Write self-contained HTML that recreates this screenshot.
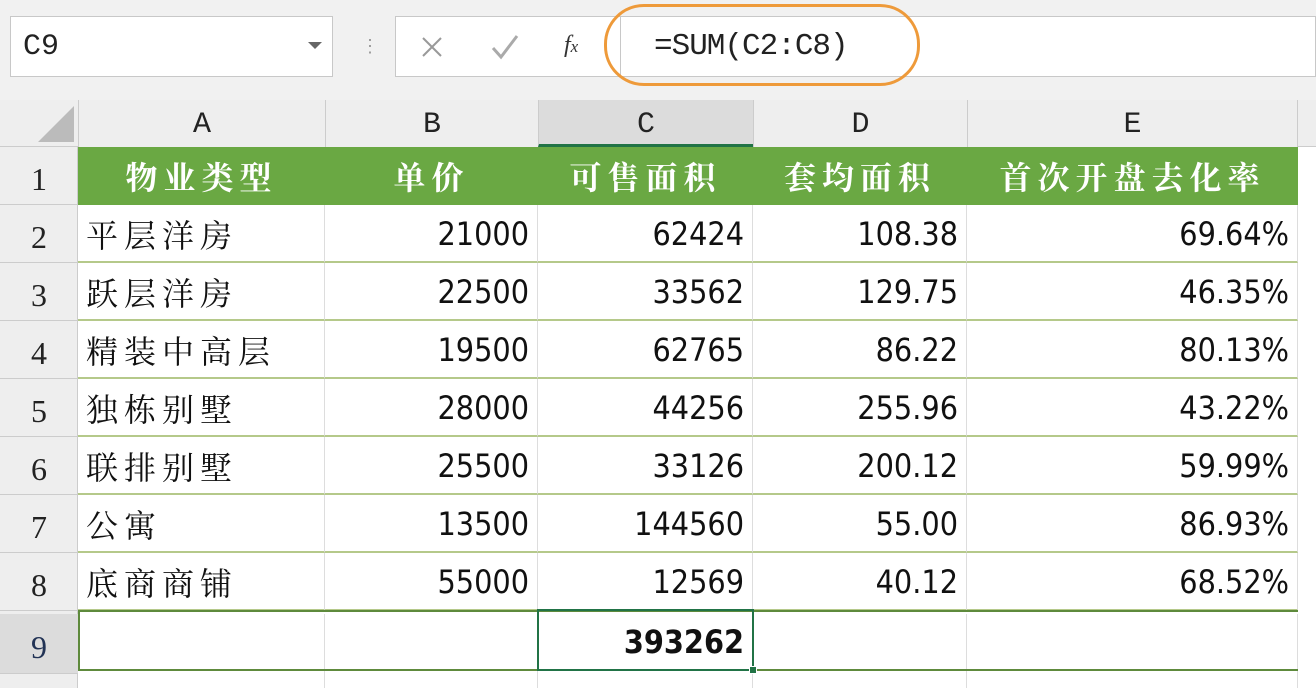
<!DOCTYPE html>
<html><head><meta charset="utf-8"><style>
body{margin:0;width:1316px;height:688px;overflow:hidden;background:#fff;font-family:"Liberation Sans","Noto Sans CJK SC",sans-serif;position:relative}
.a{position:absolute;box-sizing:border-box}
.hdr{background:#eeeeee;color:#222;font-family:"Liberation Mono","Noto Sans CJK SC",monospace;font-size:30px;text-align:center}
.cell{position:absolute;box-sizing:border-box;height:58px;line-height:58px;font-size:32px;color:#111;padding:0 8px;white-space:nowrap;overflow:hidden}
.cj{font-family:"Noto Serif CJK SC","Noto Sans CJK SC",serif;letter-spacing:6px}
.r{text-align:right;font-family:"DejaVu Sans Condensed","Liberation Sans",sans-serif;font-stretch:condensed}
.g{background:#6aa843;color:#fff;font-weight:bold;text-align:center;font-family:"Noto Serif CJK SC","Noto Sans CJK SC",serif;letter-spacing:6px}
</style></head><body>
<div class="a" style="left:0;top:0;width:1316px;height:100px;background:#f1f1f1"></div>
<div class="a" style="left:10px;top:16px;width:323px;height:61px;background:#fff;border:1px solid #c8c8c8;font-family:'Liberation Mono',monospace;font-size:30px;line-height:60px;padding-left:12px;color:#222">C9</div>
<div class="a" style="left:308px;top:42px;width:0;height:0;border-left:7px solid transparent;border-right:7px solid transparent;border-top:7px solid #666"></div>
<div class="a" style="left:361px;top:36px;color:#999;font-size:18px">⋮</div>
<div class="a" style="left:395px;top:16px;width:921px;height:61px;background:#fff;border:1px solid #c8c8c8"></div>
<svg class="a" style="left:420px;top:35px" width="24" height="24"><path d="M3 3L21 21M21 3L3 21" stroke="#999" stroke-width="2"/></svg>
<svg class="a" style="left:490px;top:33px" width="30" height="28"><path d="M3 15L11 24L27 3" stroke="#aaa" stroke-width="3" fill="none"/></svg>
<div class="a" style="left:564px;top:32px;color:#333;font-size:24px;font-style:italic;font-family:'Liberation Serif',serif">f<span style="font-size:17px">x</span></div>
<div class="a" style="left:620px;top:16px;width:1px;height:61px;background:#c8c8c8"></div>
<div class="a" style="left:654px;top:29px;font-family:'Liberation Mono',monospace;font-size:31px;color:#222;letter-spacing:-1px">=SUM(C2:C8)</div>
<div class="a" style="left:604px;top:4px;width:316px;height:82px;border:3px solid #ee9a3a;border-radius:40px"></div>
<div class="a hdr" style="left:0;top:100px;width:1316px;height:47px;border-bottom:1px solid #ccc"></div>
<div class="a" style="left:38px;top:106px;width:0;height:0;border-left:36px solid transparent;border-bottom:36px solid #bbb"></div>
<div class="a hdr" style="left:78px;top:100px;width:247px;height:47px;line-height:50px;border-left:1px solid #ccc">A</div>
<div class="a hdr" style="left:325px;top:100px;width:213px;height:47px;line-height:50px;border-left:1px solid #ccc">B</div>
<div class="a hdr" style="left:538px;top:100px;width:215px;height:47px;line-height:50px;border-left:1px solid #ccc;background:#dcdcdc;border-bottom:3px solid #217346">C</div>
<div class="a hdr" style="left:753px;top:100px;width:214px;height:47px;line-height:50px;border-left:1px solid #ccc">D</div>
<div class="a hdr" style="left:967px;top:100px;width:331px;height:47px;line-height:50px;border-left:1px solid #ccc;border-right:1px solid #ccc">E</div>
<div class="a" style="left:0;top:147px;width:78px;height:541px;background:#eeeeee;border-right:1px solid #ccc"></div>
<div id="rows"></div>
<script>
var data=[["物业类型","单价","可售面积","套均面积","首次开盘去化率"],
["平层洋房","21000","62424","108.38","69.64%"],["跃层洋房","22500","33562","129.75","46.35%"],
["精装中高层","19500","62765","86.22","80.13%"],["独栋别墅","28000","44256","255.96","43.22%"],
["联排别墅","25500","33126","200.12","59.99%"],["公寓","13500","144560","55.00","86.93%"],
["底商商铺","55000","12569","40.12","68.52%"]];
var xs=[78,325,538,753,967,1298],h="";
for(var i=0;i<9;i++){var y=147+i*58+(i==8?3:0),hh=(i==8?60:58);
 h+='<div class="a" style="left:0;top:'+y+'px;width:78px;height:'+hh+'px;line-height:'+(hh+6)+'px;text-align:center;font-size:32px;color:'+(i==8?'#235':'#222')+';font-family:\'Liberation Serif\',serif;border-bottom:1px solid #ccc;'+(i==8?'background:#dcdcdc':'')+'">'+(i+1)+'</div>';
 if(i<8){for(var j=0;j<5;j++){var c=(i==0?'cell g':(j==0?'cell cj':'cell r'));
  h+='<div class="'+c+'" style="left:'+xs[j]+'px;top:'+y+'px;width:'+(xs[j+1]-xs[j])+'px;'+(i>0?'border-bottom:2px solid #b5c98a;border-right:1px solid #ddd;':'')+'">'+data[i][j]+'</div>';}}
 else{for(var j=0;j<5;j++)h+='<div class="a" style="left:'+xs[j]+'px;top:'+y+'px;width:'+(xs[j+1]-xs[j])+'px;height:60px;border-right:1px solid #ddd"></div>';}
}
for(var j=0;j<5;j++)h+='<div class="a" style="left:'+xs[j]+'px;top:670px;width:'+(xs[j+1]-xs[j])+'px;height:18px;border-right:1px solid #ddd"></div>';
h+='<div class="a" style="left:78px;top:610px;width:1220px;height:61px;border:2px solid #5e8a3c;border-right:none"></div>';
h+='<div class="a" style="left:537px;top:609px;width:217px;height:62px;border:2px solid #217346;font-size:32px;font-weight:bold;text-align:right;line-height:62px;padding-right:8px;color:#111;font-family:\'DejaVu Sans Condensed\',sans-serif">393262</div>';
h+='<div class="a" style="left:749px;top:666px;width:8px;height:8px;background:#217346;border:1px solid #fff"></div>';
document.getElementById('rows').innerHTML=h;
</script>
</body></html>
